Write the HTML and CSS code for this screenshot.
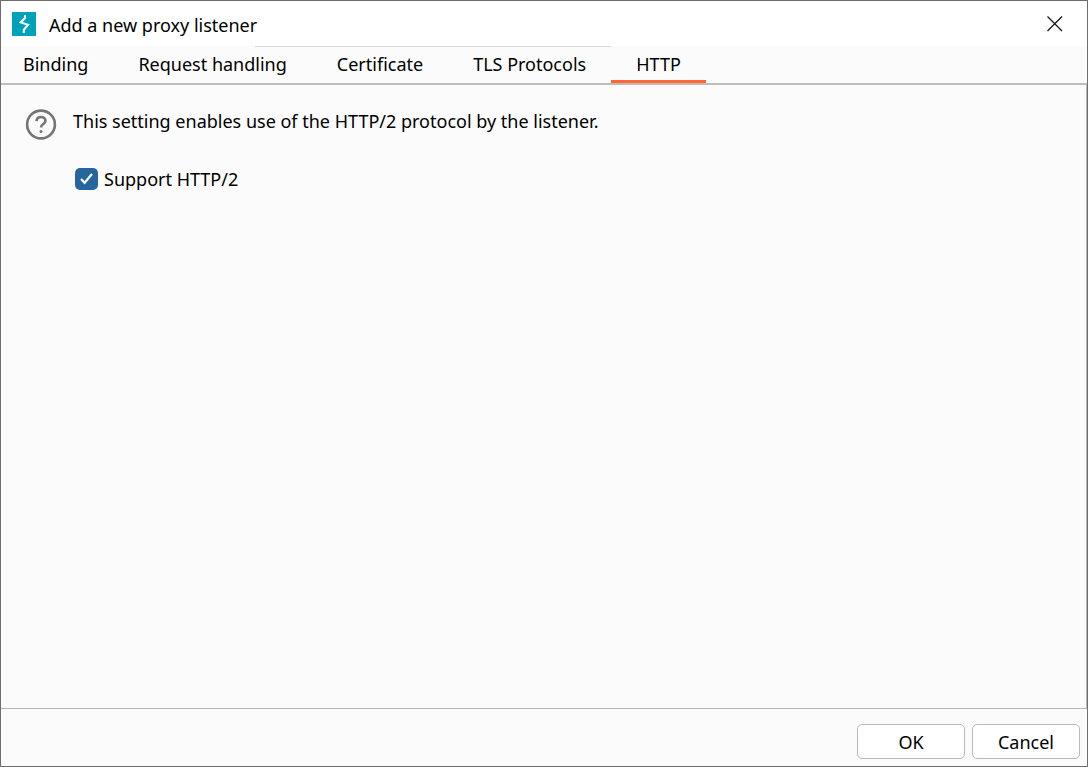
FILE: index.html
```html
<!DOCTYPE html>
<html lang="en">
<head>
<meta charset="utf-8">
<title>Add a new proxy listener</title>
<link rel="stylesheet" href="styles.css">
</head>
<body>
<main class="dialog">
  <header class="titlebar">
    <svg class="logo" viewBox="0 0 24 24" aria-hidden="true"><rect width="24" height="24" fill="#00a2ba"/><path d="M13 3v3L8.6 10.4l7.4 2.4-4.2 5V21" fill="none" stroke="#fff" stroke-width="2.1" stroke-linejoin="miter"/></svg>
    <h1 class="title">Add a new proxy listener</h1>
    <button class="close" type="button" aria-label="Close"><svg viewBox="0 0 16 16"><path d="M.5.5l14.5 14.5M15 .5L.5 15" stroke="#111" stroke-width="1.2"/></svg></button>
  </header>
  <nav class="tabs" role="tablist">
    <button class="tab" type="button" role="tab">Binding</button>
    <button class="tab edge-start" type="button" role="tab">Request handling</button>
    <button class="tab edge" type="button" role="tab">Certificate</button>
    <button class="tab edge" type="button" role="tab">TLS Protocols</button>
    <button class="tab active" type="button" role="tab" aria-selected="true">HTTP</button>
  </nav>
  <section class="panel">
    <button class="help" type="button" aria-label="Help"><svg viewBox="0 0 32 32" fill="none" stroke="#757575"><circle cx="16" cy="15.5" r="13.9" stroke-width="2.6"/><path d="M11.5 12.2c.2-2.6 2-4.2 4.5-4.2s4.5 1.6 4.5 3.8c0 3.4-4.5 3-4.5 6.6" stroke-width="2.6"/><circle cx="16" cy="22.4" r="1.5" fill="#757575" stroke="none"/></svg></button>
    <div class="settings">
      <p class="description">This setting enables use of the HTTP/2 protocol by the listener.</p>
      <label class="option" for="http2"><input class="check" id="http2" type="checkbox" checked><svg class="tick" viewBox="0 0 23 23" aria-hidden="true"><path d="M6 12l3.6 3.8L17 7" fill="none" stroke="#fff" stroke-width="2.2"/></svg><span>Support HTTP/2</span></label>
    </div>
  </section>
  <footer class="actions">
    <button class="action" type="button">OK</button>
    <button class="action" type="button">Cancel</button>
  </footer>
</main>
</body>
</html>
```
FILE: styles.css
```css
* { box-sizing: border-box; }
body { margin: 0; font: 18px/24px "Noto Sans", "Open Sans", sans-serif; color: #000; }
button { margin: 0; padding: 0; border: 0; background: none; font: inherit; color: inherit; }
.dialog { display: flex; flex-direction: column; min-height: 100vh; border: 1px solid #6e6c6e; background: #fbfbfb; }
.titlebar { display: flex; align-items: center; gap: 13px; height: 45px; padding: 0 24px 0 11px; background: #fff; }
.logo { width: 24px; height: 24px; }
.title { flex: 1; margin: 0; padding-top: 2px; font-size: 18px; font-weight: 400; }
.close { display: flex; }
.close svg { width: 16px; height: 16px; }
.tabs { display: flex; height: 39px; border-bottom: 2px solid #bfbcbd; }
.tab { padding: 2px 25px 0; border-bottom: 3px solid transparent; }
.tab:first-child { padding-left: 22px; }
.edge, .edge-start { background: linear-gradient(#d8d8d8, #d8d8d8) right top / 100% 1px no-repeat; }
.edge-start { background-size: 57px 1px; }
.tab.active { border-bottom-color: #ff6633; }
.panel { display: flex; flex: 1; align-items: flex-start; gap: 16px; padding: 24px; border: solid #b9b5b7; border-width: 0 1px 1px 0; }
.help svg { display: block; width: 32px; height: 32px; }
.settings { display: flex; flex-direction: column; gap: 34px; }
.description { margin: 0; }
.option { position: relative; display: flex; align-items: center; gap: 6px; padding-left: 2px; }
.check { appearance: none; width: 23px; height: 22px; margin: 0; border-radius: 5px; background: #26659e; }
.tick { position: absolute; left: 2px; top: 0; width: 23px; height: 23px; display: none; pointer-events: none; }
.check:checked + .tick { display: block; }
.actions { display: flex; justify-content: flex-end; gap: 7px; padding: 15px 7px 7px; }
.action { width: 108px; height: 35px; border: 1px solid #bcb7b9; border-radius: 5px; background: #fff; }
```
